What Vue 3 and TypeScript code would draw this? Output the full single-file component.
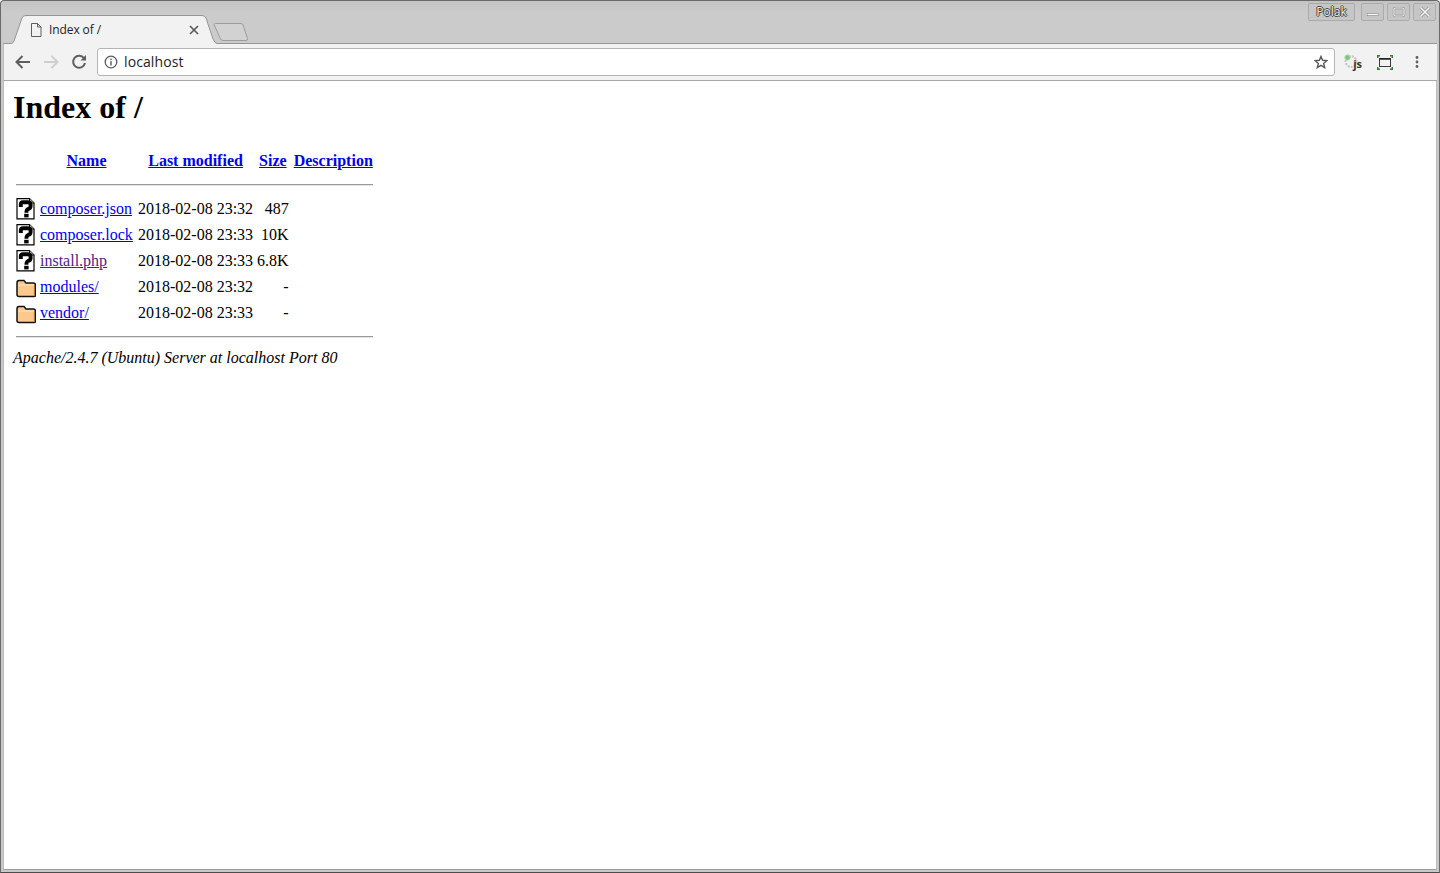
<script setup lang="ts">
interface Row {
  name: string
  date: string
  size: string
  icon: 'unknown' | 'folder'
  visited?: boolean
}
const rows: Row[] = [
  { name: 'composer.json', date: '2018-02-08 23:32', size: '487', icon: 'unknown' },
  { name: 'composer.lock', date: '2018-02-08 23:33', size: '10K', icon: 'unknown' },
  { name: 'install.php', date: '2018-02-08 23:33', size: '6.8K', icon: 'unknown', visited: true },
  { name: 'modules/', date: '2018-02-08 23:32', size: '-', icon: 'folder' },
  { name: 'vendor/', date: '2018-02-08 23:33', size: '-', icon: 'folder' },
]
</script>

<template>
  <div class="window">
    <header class="strip">
      <div class="tab">
        <svg class="tab-shape" width="209" height="29" viewBox="0 0 209 29">
          <path d="M0 28.5 H1 Q3 28.5 4 26 L12 3 Q13 .5 16 .5 H192 Q195 .5 196 3 L203 24 Q205 28.5 207 28.5 V29 H0 Z" fill="#f2f2f2" />
          <path d="M0 28.5 H1 Q3 28.5 4 26 L12 3 Q13 .5 16 .5 H192 Q195 .5 196 3 L203 24 Q205 28.5 207 28.5" fill="none" stroke="#959595" />
        </svg>
        <svg class="favicon" width="12" height="14" viewBox="0 0 12 14">
          <path d="M1.5 .5 H7.5 L11 4 V13.5 H1.5 Z M7.5 .5 V4 H11" fill="#f2f2f2" stroke="#5f5f5f" />
        </svg>
        <span class="tab-title">Index of /</span>
        <svg class="tab-close" width="10" height="10" viewBox="0 0 10 10">
          <path d="M1 1 L9 9 M9 1 L1 9" stroke="#5a5a5a" stroke-width="1.7" />
        </svg>
      </div>
      <svg class="new-tab" width="36" height="18" viewBox="0 0 36 18">
        <path d="M1 1.5 Q1 .5 2.5 .5 H28 Q29.5 .5 30 2 L34.5 15.5 Q35 17.5 33 17.5 H10 Q8 17.5 7.5 16 Z" fill="#d2d2d2" stroke="#9c9c9c" />
      </svg>
      <div class="spacer"></div>
      <div class="profile">Polak</div>
      <div class="winbtn">
        <svg width="14" height="10" viewBox="0 0 14 10">
          <path d="M1 7.5 H13" stroke="#8f8f8f" stroke-width="3" />
          <path d="M1.5 7.5 H12.5" stroke="#f6f6f6" stroke-width="1.4" />
        </svg>
      </div>
      <div class="winbtn">
        <svg width="14" height="10" viewBox="0 0 14 10">
          <rect x="2" y="1" width="10" height="8" rx="1.5" fill="none" stroke="#8f8f8f" stroke-width="2.4" />
          <rect x="2" y="1" width="10" height="8" rx="1.5" fill="none" stroke="#f0f0f0" stroke-width="1.2" />
        </svg>
      </div>
      <div class="winbtn">
        <svg width="14" height="10" viewBox="0 0 14 10">
          <path d="M2.5 .5 L11.5 9.5 M11.5 .5 L2.5 9.5" stroke="#8f8f8f" stroke-width="3" />
          <path d="M2.5 .5 L11.5 9.5 M11.5 .5 L2.5 9.5" stroke="#f6f6f6" stroke-width="1.5" />
        </svg>
      </div>
    </header>

    <nav class="toolbar">
      <svg class="nav back" width="16" height="14" viewBox="0 0 16 14">
        <path d="M15 7 H2 M7.5 1 L1.5 7 L7.5 13" fill="none" stroke="#5f5f5f" stroke-width="2" />
      </svg>
      <svg class="nav forward" width="16" height="14" viewBox="0 0 16 14">
        <path d="M1 7 H14 M8.5 1 L14.5 7 L8.5 13" fill="none" stroke="#cfcfcf" stroke-width="2" />
      </svg>
      <svg class="nav reload" width="16" height="16" viewBox="0 0 16 16">
        <path d="M13 4.2 A6 6 0 1 0 14 9" fill="none" stroke="#5f5f5f" stroke-width="2" />
        <path d="M9.5 6.5 H15 V1 Z" fill="#5f5f5f" />
      </svg>
      <div class="omnibox">
        <svg width="14" height="14" viewBox="0 0 14 14">
          <circle cx="7" cy="7" r="5.8" fill="none" stroke="#5a5a5a" stroke-width="1.3" />
          <path d="M7 6 V10.5 M7 3.4 V5" stroke="#5a5a5a" stroke-width="1.4" />
        </svg>
        <span class="url">localhost</span>
        <svg class="star" width="14" height="14" viewBox="0 0 14 14">
          <path d="M7 1.4 L8.6 5.3 L12.9 5.6 L9.6 8.4 L10.7 12.6 L7 10.3 L3.3 12.6 L4.4 8.4 L1.1 5.6 L5.4 5.3 Z" fill="none" stroke="#5a5a5a" stroke-width="1.4" />
        </svg>
      </div>
      <div class="ext-js">
        <svg width="18" height="17" viewBox="0 0 18 17">
          <circle cx="7" cy="7.5" r="5.4" fill="none" stroke="#c4c4c4" stroke-width="2" stroke-dasharray="2 1.2" />
          <circle cx="3.5" cy="3.5" r="2.7" fill="#7cc47f" stroke="#b9d9bb" />
        </svg>
        <span class="js">js</span>
      </div>
      <svg class="capture" width="16" height="15" viewBox="0 0 16 15">
        <path d="M.7 3 V.7 H3 M13 .7 H15.3 V3 M.7 12 V14.3 H3 M13 14.3 H15.3 V12" fill="none" stroke="#2d7d32" stroke-width="1.4" />
        <rect x="2.5" y="3.5" width="11" height="8" fill="none" stroke="#3a3a3a" />
        <path d="M2.5 4 H13.5" stroke="#222" stroke-width="1.6" />
      </svg>
      <svg class="dots" width="4" height="12" viewBox="0 0 4 12">
        <circle cx="2" cy="1.5" r="1.4" fill="#5f5f5f" />
        <circle cx="2" cy="6" r="1.4" fill="#5f5f5f" />
        <circle cx="2" cy="10.5" r="1.4" fill="#5f5f5f" />
      </svg>
    </nav>

    <main class="page">
      <h1>Index of /</h1>
      <table>
        <tbody>
          <tr>
            <th class="icon-cell"><div class="blank"></div></th>
            <th class="name-col"><a href="#">Name</a></th>
            <th><a href="#">Last modified</a></th>
            <th><a href="#">Size</a></th>
            <th class="desc-col"><a href="#">Description</a></th>
          </tr>
          <tr><th colspan="5"><hr /></th></tr>
          <tr v-for="row in rows" :key="row.name">
            <td class="icon-cell">
              <svg v-if="row.icon === 'unknown'" class="file-icon" width="20" height="22" viewBox="0 0 20 22">
                <path d="M1 .6 H13.5 L18 5 V20.8 H1 Z" fill="#fff" stroke="#000" stroke-width="1.2" />
                <path d="M13.5 .6 V5 H18" fill="#ccc" stroke="#000" />
                <path d="M4.8 9 V6.5 Q4.8 4.2 7 4.2 H12 Q14.6 4.2 14.6 6.5 V8.3 Q14.6 10.3 12 11 Q10.4 11.5 10.4 14.8" fill="none" stroke="#000" stroke-width="3.9" />
                <rect x="8.2" y="15.8" width="4.4" height="3.6" fill="#000" />
              </svg>
              <svg v-else class="file-icon" width="20" height="22" viewBox="0 0 20 22">
                <path d="M1 7 Q1 4.6 3 4.6 H8 L10 7 H17.5 Q19.4 7 19.4 9 V19.4 Q19.4 20.6 18 20.6 H3 Q1 20.6 1 18.6 Z" fill="#fcc88b" stroke="#111" stroke-width="1.5" />
                <path d="M2.2 9 H18" stroke="#ffe6c4" />
                <path d="M18.4 9.5 V19.5" stroke="#a8733a" />
              </svg>
            </td>
            <td><a href="#" :class="{ visited: row.visited }">{{ row.name }}</a></td>
            <td class="right">{{ row.date }}</td>
            <td class="right">{{ row.size }}</td>
            <td>&nbsp;</td>
          </tr>
          <tr><th colspan="5"><hr /></th></tr>
        </tbody>
      </table>
      <address>Apache/2.4.7 (Ubuntu) Server at localhost Port 80</address>
    </main>
  </div>
</template>

<style>
html, body { margin: 0; padding: 0; }
</style>

<style scoped>
.window {
  width: 1440px;
  height: 873px;
  box-sizing: border-box;
  display: flex;
  flex-direction: column;
  overflow: hidden;
  background: #c9c9c9;
  border: 1px solid #6a6a6a;
  border-bottom: 1px solid #4c4c4c;
  border-top-left-radius: 4px;
  border-top-right-radius: 4px;
  padding: 0 2px 2px;
}
.strip {
  height: 42px;
  flex: none;
  display: flex;
  align-items: flex-start;
  padding-left: 7px;
  padding-right: 1px;
  background: linear-gradient(#c4c4c4, #cbcbcb 30%);
}
.tab {
  position: relative;
  z-index: 1;
  width: 209px;
  height: 29px;
  margin-top: 14px;
  flex: none;
  display: flex;
  align-items: center;
}
.tab-shape {
  position: absolute;
  inset: 0;
}
.favicon {
  position: relative;
  margin-left: 20px;
  flex: none;
}
.tab-title {
  position: relative;
  margin-left: 7px;
  font: 12px/16px "Open Sans", "Noto Sans", sans-serif;
  color: #222;
  width: 135px;
  letter-spacing: -0.1px;
}
.tab-close {
  position: relative;
  margin-left: 5px;
}
.new-tab {
  margin-top: 22px;
  margin-left: -6px;
  flex: none;
}
.spacer { flex: 1; }
.profile {
  width: 45px;
  height: 16px;
  margin-top: 2px;
  margin-right: 3px;
  border: 1px solid #a9a9a9;
  border-radius: 2px;
  background: #c6c6c6;
  font: 12px/16px "Open Sans", "Noto Sans", sans-serif;
  color: #ececec;
  text-align: center;
  text-shadow: 1px 0 0 #444, -1px 0 0 #444, 0 1px 0 #444, 0 -1px 0 #444;
}
.winbtn {
  width: 21px;
  height: 16px;
  margin-top: 2px;
  margin-left: 3px;
  border: 1px solid #ababab;
  border-radius: 2px;
  background: #c6c6c6;
  display: flex;
  align-items: center;
  justify-content: center;
}
.toolbar {
  height: 38px;
  flex: none;
  box-sizing: border-box;
  display: flex;
  align-items: center;
  background: #f2f2f2;
  border-top: 1px solid #959595;
  border-bottom: 1px solid #a8a8a8;
  border-left: 1px solid #bdbdbd;
  padding-left: 11px;
}
.nav { flex: none; }
.forward { margin-left: 12px; }
.reload { margin-left: 12px; margin-right: 10px; }
.omnibox {
  width: 1238px;
  height: 28px;
  flex: none;
  box-sizing: border-box;
  display: flex;
  align-items: center;
  background: #fff;
  border: 1px solid #b5b5b5;
  border-radius: 3px;
  padding: 0 6px 0 6px;
}
.url {
  margin-left: 6px;
  flex: 1;
  font: 14px/18px "Open Sans", "Noto Sans", sans-serif;
  letter-spacing: 0.1px;
  color: #222;
}
.ext-js {
  position: relative;
  width: 18px;
  height: 17px;
  margin-left: 9px;
  flex: none;
}
.js {
  position: absolute;
  right: 0;
  bottom: 2px;
  font: bold 11px/10px "Open Sans", sans-serif;
  color: #333;
}
.capture { margin-left: 15px; flex: none; }
.dots { margin-left: 22px; flex: none; }
.page {
  flex: 1;
  background: #fff;
  border-left: 1px solid #bdbdbd;
  border-right: 1px solid #bdbdbd;
  border-bottom: 1px solid #9a9a9a;
  padding: 8px 8px 0 9px;
  font: 16px/18px "Liberation Serif", serif;
  color: #000;
}
h1 {
  margin: 0 0 21.44px;
  font: bold 32px/37px "Liberation Serif", serif;
}
table {
  border-collapse: separate;
  border-spacing: 2px;
  font: 16px/18px "Liberation Serif", serif;
}
th, td { padding: 1px; }
th { font-weight: bold; text-align: center; }
.icon-cell { vertical-align: top; }
.blank { width: 20px; height: 22px; }
.name-col { min-width: 93px; padding-right: 2px; }
.desc-col { padding-left: 2px; }
.file-icon { display: block; }
.right { text-align: right; }
a { color: #0000ee; text-decoration: underline; }
a.visited { color: #551a8b; }
hr {
  margin: 8px 0;
  height: 0;
  border: 0;
  border-top: 1px solid #9a9a9a;
  border-bottom: 1px solid #e4e4e4;
}
address {
  font-style: italic;
  font-size: 16px;
  line-height: 18px;
}
</style>
